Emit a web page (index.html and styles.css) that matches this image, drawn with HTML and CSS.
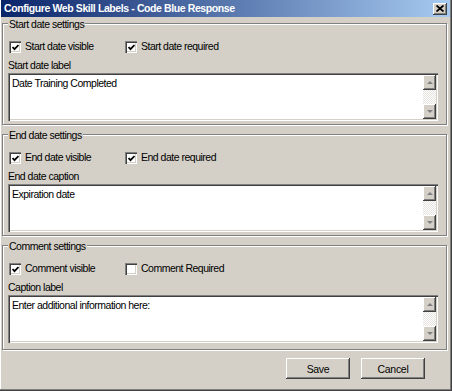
FILE: index.html
```html
<!DOCTYPE html>
<html lang="en">
<head>
  <meta charset="UTF-8" />
  <title>Configure Web Skill Labels</title>
  <link rel="stylesheet" href="styles.css">
</head>
<body>
  <div class="window">
    <!-- Title bar -->
    <div class="titlebar">
      <span class="titlebar__text">Configure Web Skill Labels - Code Blue Response</span>
      <span class="titlebar__close">
        <svg width="8" height="7" viewBox="0 0 8 7"><path d="M0.5 0.5 L7.5 6.5 M7.5 0.5 L0.5 6.5" stroke="#000" stroke-width="1.8" /></svg>
      </span>
    </div>

    <div class="dialog">
      <!-- Start date -->
      <fieldset class="group">
        <legend class="group__title">Start date settings</legend>
        <div class="group__checks">
          <label class="check check--first"><span class="check__box is-checked"></span>Start date visible</label>
          <label class="check"><span class="check__box is-checked"></span>Start date required</label>
        </div>
        <div class="group__label">Start date label</div>
        <div class="memo">
          <div class="memo__text">Date Training Completed</div>
          <div class="memo__scroll">
            <span class="memo__btn memo__btn--up"></span>
            <span class="memo__track"></span>
            <span class="memo__btn memo__btn--down"></span>
          </div>
        </div>
      </fieldset>

      <!-- End date -->
      <fieldset class="group">
        <legend class="group__title">End date settings</legend>
        <div class="group__checks">
          <label class="check check--first"><span class="check__box is-checked"></span>End date visible</label>
          <label class="check"><span class="check__box is-checked"></span>End date required</label>
        </div>
        <div class="group__label">End date caption</div>
        <div class="memo">
          <div class="memo__text">Expiration date</div>
          <div class="memo__scroll">
            <span class="memo__btn memo__btn--up"></span>
            <span class="memo__track"></span>
            <span class="memo__btn memo__btn--down"></span>
          </div>
        </div>
      </fieldset>

      <!-- Comment -->
      <fieldset class="group group--last">
        <legend class="group__title">Comment settings</legend>
        <div class="group__checks">
          <label class="check check--first"><span class="check__box is-checked"></span>Comment visible</label>
          <label class="check"><span class="check__box"></span>Comment Required</label>
        </div>
        <div class="group__label">Caption label</div>
        <div class="memo">
          <div class="memo__text">Enter additional information here:</div>
          <div class="memo__scroll">
            <span class="memo__btn memo__btn--up"></span>
            <span class="memo__track"></span>
            <span class="memo__btn memo__btn--down"></span>
          </div>
        </div>
      </fieldset>

      <!-- Buttons -->
      <div class="dialog__buttons">
        <button class="btn">Save</button>
        <button class="btn">Cancel</button>
      </div>
    </div>
  </div>
</body>
</html>
```

FILE: styles.css
```css
/* Classic dialog look */
body {
  margin: 0;
  font-family: 'Liberation Sans', Arial, sans-serif;
  font-size: 10.5px;
  letter-spacing: -0.5px;
  color: #000;
  background: #d4d0c8;
}
.window {
  width: 452px;
  height: 391px;
  box-sizing: border-box;
  padding: 0 3px 3px 2px;
  background: #d4d0c8;
  box-shadow: inset -1px -1px 0 #404040, inset -2px -2px 0 #808080, inset 1px 0 0 #fff;
}
/* Title bar */
.titlebar {
  height: 17px;
  margin: 0 -1px 0 -1px;
  padding: 0 3px;
  display: flex;
  align-items: center;
  justify-content: space-between;
  background: linear-gradient(to right, #0a246a, #a6caf0);
}
.titlebar__text {
  color: #fff;
  font-weight: 700;
  font-size: 10.5px;
  letter-spacing: -0.4px;
  line-height: 13px;
}
.titlebar__close {
  width: 14px;
  height: 12px;
  display: flex;
  align-items: center;
  justify-content: center;
  background: #d4d0c8;
  box-shadow: inset -1px -1px 0 #404040, inset 1px 1px 0 #fff, inset -2px -2px 0 #808080;
}
/* Group boxes */
.group {
  margin: 0 2px 3px 0;
  padding: 0 8px 3px 5px;
  border: 1px solid #808080;
  box-shadow: inset 1px 1px 0 #fff, 1px 1px 0 #fff;
  min-width: 0;
}
.group--last {
  padding-bottom: 6px;
}
.group__title {
  padding: 3px 1px 0 1px;
  margin-left: 0;
  line-height: 9px;
  background: #d4d0c8;
}
.group__checks {
  display: flex;
  margin-top: 11px;
  padding-left: 1px;
  height: 13px;
}
.check {
  display: flex;
  align-items: center;
  gap: 4px;
  line-height: 13px;
}
.check--first {
  width: 116px;
}
.check__box {
  width: 12px;
  height: 12px;
  box-sizing: border-box;
  background: #fff;
  box-shadow: inset 1px 1px 0 #808080, inset 2px 2px 0 #404040, inset -1px -1px 0 #fff, inset -2px -2px 0 #d4d0c8;
  display: flex;
  align-items: center;
  justify-content: center;
}
.check__box.is-checked::after {
  content: '';
  width: 7px;
  height: 7px;
  margin: 1px 0 0 1px;
  background: url("data:image/svg+xml,%3Csvg xmlns='http://www.w3.org/2000/svg' width='7' height='7'%3E%3Cpath d='M0.5 3 L2.5 5.2 L6.5 1' fill='none' stroke='%23000' stroke-width='1.8'/%3E%3C/svg%3E") no-repeat;
}
.group__label {
  margin-top: 6px;
  line-height: 13px;
  margin-bottom: 1px;
  padding-left: 0;
}
/* Memo (text area) */
.memo {
  height: 48px;
  box-sizing: border-box;
  padding: 2px;
  display: flex;
  background: #fff;
  box-shadow: inset 1px 1px 0 #808080, inset 2px 2px 0 #404040, inset -1px -1px 0 #fff, inset -2px -2px 0 #d4d0c8;
}
.memo__text {
  flex: 1;
  padding: 2px 2px 0 2px;
  line-height: 13px;
}
.memo__scroll {
  width: 13px;
  display: flex;
  flex-direction: column;
}
.memo__btn {
  height: 15px;
  flex: none;
  display: flex;
  align-items: center;
  justify-content: center;
  background: #d4d0c8;
  box-shadow: inset -1px -1px 0 #404040, inset 1px 1px 0 #fff, inset -2px -2px 0 #808080;
}
.memo__btn::after {
  content: '';
  border-left: 3px solid transparent;
  border-right: 3px solid transparent;
}
.memo__btn--up::after {
  border-bottom: 3px solid #808080;
}
.memo__btn--down::after {
  border-top: 3px solid #808080;
}
.memo__track {
  flex: 1;
  background: repeating-conic-gradient(#e6e3de 0 25%, #fff 0 50%) 0 0 / 2px 2px;
}
/* Bottom buttons */
.dialog__buttons {
  display: flex;
  justify-content: flex-end;
  gap: 11px;
  margin-top: 8px;
  padding-right: 24px;
}
.btn {
  width: 64px;
  height: 21px;
  padding: 0;
  border: none;
  font-family: inherit;
  font-size: 10.5px;
  letter-spacing: -0.3px;
  background: #d4d0c8;
  box-shadow: inset -1px -1px 0 #404040, inset 1px 1px 0 #fff, inset -2px -2px 0 #808080;
}
```
